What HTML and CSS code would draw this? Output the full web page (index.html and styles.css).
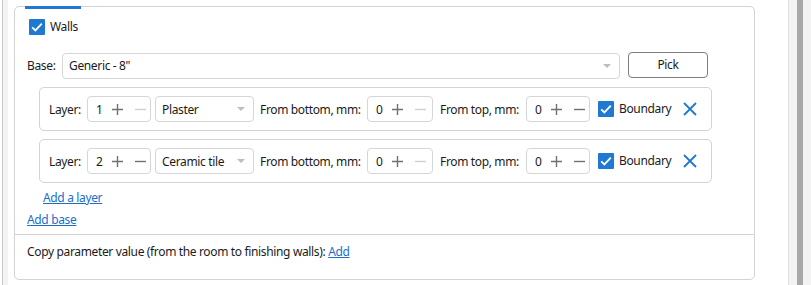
FILE: index.html
```html
<!DOCTYPE html>
<html>
<head>
<meta charset="utf-8">
<link rel="stylesheet" href="styles.css">
</head>
<body>
<div class="page">
  <div class="gutter"></div>
  <div class="main">
    <div class="card">
      <div class="tab-bar"></div>
      <div class="section">
        <div class="walls-row">
          <span class="check"><svg width="16" height="16" viewBox="0 0 16 16"><path d="M3.2 8.3 L6.4 11.4 L12.8 4.6" fill="none" stroke="#fff" stroke-width="1.8"/></svg></span>
          <span class="check-label">Walls</span>
        </div>
        <div class="base-row">
          <span class="label base-label">Base:</span>
          <div class="combo combo-base"><span>Generic - 8"</span><span class="arrow"></span></div>
          <button class="btn">Pick</button>
        </div>
        <div class="layers">
          <div class="layer">
            <span class="label l-layer">Layer:</span>
            <div class="spin"><span class="num">1</span><svg class="plus" width="11" height="11" viewBox="0 0 11 11"><path d="M0 5.5 H11 M5.5 0 V11" stroke="#707070" stroke-width="1.4"/></svg><svg class="minus" width="11" height="11" viewBox="0 0 11 11"><path d="M0 5.5 H11" stroke="#cfcfcf" stroke-width="1.4"/></svg></div>
            <div class="combo combo-mat"><span>Plaster</span><span class="arrow"></span></div>
            <span class="label l-bottom">From bottom, mm:</span>
            <div class="spin spin-b"><span class="num">0</span><svg class="plus" width="11" height="11" viewBox="0 0 11 11"><path d="M0 5.5 H11 M5.5 0 V11" stroke="#707070" stroke-width="1.4"/></svg><svg class="minus" width="11" height="11" viewBox="0 0 11 11"><path d="M0 5.5 H11" stroke="#cfcfcf" stroke-width="1.4"/></svg></div>
            <span class="label l-top">From top, mm:</span>
            <div class="spin spin-t"><span class="num">0</span><svg class="plus" width="11" height="11" viewBox="0 0 11 11"><path d="M0 5.5 H11 M5.5 0 V11" stroke="#707070" stroke-width="1.4"/></svg><svg class="minus" width="11" height="11" viewBox="0 0 11 11"><path d="M0 5.5 H11" stroke="#707070" stroke-width="1.4"/></svg></div>
            <span class="check check-b"><svg width="16" height="16" viewBox="0 0 16 16"><path d="M3.2 8.3 L6.4 11.4 L12.8 4.6" fill="none" stroke="#fff" stroke-width="1.8"/></svg></span>
            <span class="check-label b-label">Boundary</span>
            <svg class="close" width="14" height="14" viewBox="0 0 14 14"><path d="M1 1 L13 13 M13 1 L1 13" stroke="#1f78d1" stroke-width="1.8"/></svg>
          </div>
          <div class="layer">
            <span class="label l-layer">Layer:</span>
            <div class="spin"><span class="num">2</span><svg class="plus" width="11" height="11" viewBox="0 0 11 11"><path d="M0 5.5 H11 M5.5 0 V11" stroke="#707070" stroke-width="1.4"/></svg><svg class="minus" width="11" height="11" viewBox="0 0 11 11"><path d="M0 5.5 H11" stroke="#707070" stroke-width="1.4"/></svg></div>
            <div class="combo combo-mat"><span>Ceramic tile</span><span class="arrow"></span></div>
            <span class="label l-bottom">From bottom, mm:</span>
            <div class="spin spin-b"><span class="num">0</span><svg class="plus" width="11" height="11" viewBox="0 0 11 11"><path d="M0 5.5 H11 M5.5 0 V11" stroke="#707070" stroke-width="1.4"/></svg><svg class="minus" width="11" height="11" viewBox="0 0 11 11"><path d="M0 5.5 H11" stroke="#cfcfcf" stroke-width="1.4"/></svg></div>
            <span class="label l-top">From top, mm:</span>
            <div class="spin spin-t"><span class="num">0</span><svg class="plus" width="11" height="11" viewBox="0 0 11 11"><path d="M0 5.5 H11 M5.5 0 V11" stroke="#707070" stroke-width="1.4"/></svg><svg class="minus" width="11" height="11" viewBox="0 0 11 11"><path d="M0 5.5 H11" stroke="#707070" stroke-width="1.4"/></svg></div>
            <span class="check check-b"><svg width="16" height="16" viewBox="0 0 16 16"><path d="M3.2 8.3 L6.4 11.4 L12.8 4.6" fill="none" stroke="#fff" stroke-width="1.8"/></svg></span>
            <span class="check-label b-label">Boundary</span>
            <svg class="close" width="14" height="14" viewBox="0 0 14 14"><path d="M1 1 L13 13 M13 1 L1 13" stroke="#1f78d1" stroke-width="1.8"/></svg>
          </div>
          <a class="link add-layer" href="#">Add a layer</a>
        </div>
        <a class="link add-base" href="#">Add base</a>
      </div>
      <div class="footer">
        <span class="label">Copy parameter value (from the room to finishing walls):</span> <a class="link" href="#">Add</a>
      </div>
    </div>
  </div>
  <div class="scrollbar"><div class="thumb"></div></div>
</div>
</body>
</html>
```

FILE: styles.css
```css
html, body {
  margin: 0;
  padding: 0;
  background: #ffffff;
}
body {
  font-family: "Noto Sans", "Open Sans", sans-serif;
  font-size: 12px;
  letter-spacing: -0.35px;
  color: #1b1b1b;
}
.page {
  display: flex;
  height: 285px;
  overflow: hidden;
}
.gutter {
  width: 5px;
  margin-left: 2px;
  border-left: 1px solid #c9c9c9;
  background: #f3f3f3;
  flex: none;
}
.main {
  flex: 1;
  padding: 6px 33px 0 6px;
}
.scrollbar {
  width: 22px;
  flex: none;
  background: #f3f3f3;
  border-left: 1px solid #e0e0e0;
  display: flex;
  justify-content: center;
}
.thumb {
  width: 6px;
  background: #a8a8a8;
}
.card {
  border: 1px solid #d3d3d3;
  border-radius: 5px;
  height: 274px;
  box-sizing: border-box;
  display: flex;
  flex-direction: column;
}
.tab-bar {
  width: 56px;
  height: 3px;
  margin-top: -1px;
  margin-left: 10px;
  background: #1f78d1;
}
.section {
  padding: 10px 12px 0 12px;
  display: flex;
  flex-direction: column;
  height: 226px;
  box-sizing: border-box;
  border-bottom: 1px solid #d3d3d3;
}
.label, .check-label {
  white-space: nowrap;
  flex: none;
}
.walls-row {
  display: flex;
  align-items: center;
  height: 16px;
  margin-left: 2px;
}
.check {
  width: 16px;
  height: 16px;
  background: #1f78d1;
  border-radius: 1px;
  display: block;
  flex: none;
}
.check svg { display: block; }
.check-label {
  margin-left: 5px;
  line-height: 16px;
}
.base-row {
  display: flex;
  align-items: center;
  margin-top: 17px;
  height: 27px;
}
.base-label {
  width: 35px;
}
.combo {
  height: 26px;
  box-sizing: border-box;
  border: 1px solid #d6d6d6;
  border-radius: 4px;
  display: flex;
  align-items: center;
  justify-content: space-between;
  padding: 0 6px 0 6px;
  background: #fff;
  flex: none;
  white-space: nowrap;
}
.combo-base {
  width: 558px;
}
.arrow {
  width: 0;
  height: 0;
  border-left: 4px solid transparent;
  border-right: 4px solid transparent;
  border-top: 4px solid #bdbdbd;
  margin-right: 2px;
}
.btn {
  margin-left: 8px;
  width: 80px;
  height: 26px;
  border: 1px solid #7d7d7d;
  border-radius: 4px;
  background: #fff;
  font-family: inherit;
  font-size: 12px;
  letter-spacing: -0.35px;
  color: #1b1b1b;
  padding: 0;
  position: relative;
  top: -1px;
}
.layers {
  display: flex;
  flex-direction: column;
  margin-left: 12px;
  margin-top: 8px;
}
.layer {
  height: 44px;
  box-sizing: border-box;
  width: 673px;
  border: 1px solid #d3d3d3;
  border-radius: 5px;
  display: flex;
  align-items: center;
  padding-left: 9px;
  margin-bottom: 8px;
}
.layer + .layer { margin-bottom: 0; }
.l-layer { width: 38px; }
.spin {
  width: 64px;
  height: 26px;
  box-sizing: border-box;
  border: 1px solid #d6d6d6;
  border-radius: 4px;
  display: flex;
  align-items: center;
  flex: none;
}
.spin .num {
  width: 24px;
  padding-left: 8px;
  box-sizing: border-box;
}
.spin .minus { margin-left: 12px; }
.spin-b { width: 66px; }
.combo-mat {
  width: 99px;
  margin-left: 4px;
}
.l-bottom { margin-left: 6px; width: 107px; }
.l-top { margin-left: 7px; width: 86px; }
.check-b { margin-left: 8px; }
.b-label { width: 59px; }
.close { margin-left: 5px; flex: none; }
.link {
  color: #1a6fca;
  text-decoration: underline;
  line-height: 16px;
}
.add-layer {
  margin-top: 7px;
  margin-left: 4px;
  align-self: flex-start;
}
.add-base {
  margin-top: 6px;
  align-self: flex-start;
}
.footer {
  padding: 9px 12px 0 12px;
  line-height: 16px;
}
```
